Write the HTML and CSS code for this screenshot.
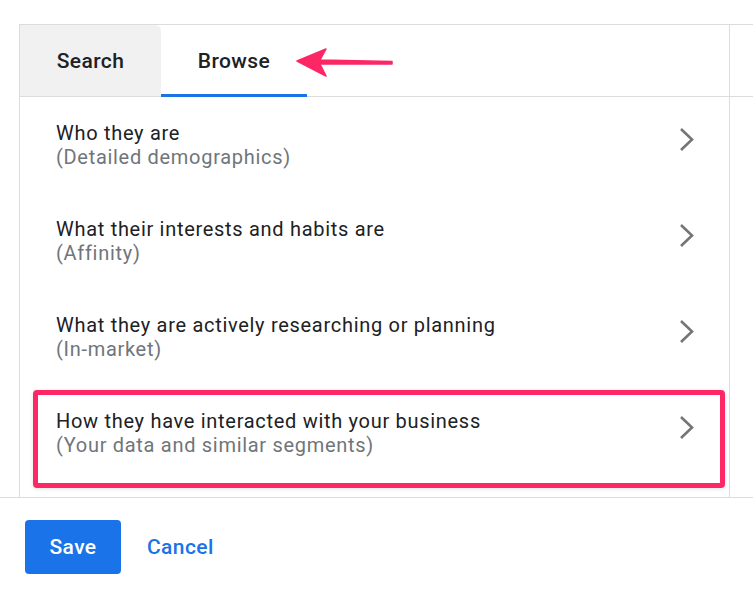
FILE: index.html
```html
<!DOCTYPE html>
<html lang="en">
<head>
    <meta charset="UTF-8">
    <title>Audience segments</title>
    <link rel="stylesheet" href="styles.css">
</head>
<body>
    <div class="dialog">
        <div class="tabs">
            <div class="tabs-inner">
                <div class="tab">Search</div>
                <div class="tab tab-active">Browse</div>
                <svg class="tab-arrow" width="100" height="32" viewBox="0 0 100 32">
                    <path d="M1 14 L30 2 L24 13 L96 14.5 L96 17 L24 17 L30 29 Z" fill="#fd2765" stroke="#fd2765" stroke-width="1.5" stroke-linejoin="round"/>
                </svg>
            </div>
        </div>

        <div class="list">
            <div class="row">
                <div class="row-text">
                    <div class="row-title">Who they are</div>
                    <div class="row-sub">(Detailed demographics)</div>
                </div>
                <svg class="chevron" width="16" height="26" viewBox="0 0 16 26"><polyline points="2,2 13,12.5 2,23" /></svg>
            </div>
            <div class="row">
                <div class="row-text">
                    <div class="row-title">What their interests and habits are</div>
                    <div class="row-sub">(Affinity)</div>
                </div>
                <svg class="chevron" width="16" height="26" viewBox="0 0 16 26"><polyline points="2,2 13,12.5 2,23" /></svg>
            </div>
            <div class="row">
                <div class="row-text">
                    <div class="row-title">What they are actively researching or planning</div>
                    <div class="row-sub">(In-market)</div>
                </div>
                <svg class="chevron" width="16" height="26" viewBox="0 0 16 26"><polyline points="2,2 13,12.5 2,23" /></svg>
            </div>
            <div class="row row-highlight">
                <div class="row-text">
                    <div class="row-title">How they have interacted with your business</div>
                    <div class="row-sub">(Your data and similar segments)</div>
                </div>
                <svg class="chevron" width="16" height="26" viewBox="0 0 16 26"><polyline points="2,2 13,12.5 2,23" /></svg>
                <div class="highlight-box"></div>
            </div>
        </div>
    </div>

    <div class="footer">
        <button class="btn-save">Save</button>
        <button class="btn-cancel">Cancel</button>
    </div>
</body>
</html>
```

FILE: styles.css
```css
body {
    margin: 0;
    background: #fff;
    font-family: Roboto, "Liberation Sans", sans-serif;
    color: #202124;
}

/* Panel */
.dialog {
    margin: 24px 0 0 19px;
    border-top: 1px solid #dadce0;
    border-left: 1px solid #dadce0;
}

/* Tabs */
.tabs {
    border-bottom: 1px solid #dadce0;
}

.tabs-inner {
    width: 710px;
    box-sizing: border-box;
    height: 71px;
    border-right: 1px solid #dadce0;
    display: flex;
    position: relative;
}

.tab {
    display: flex;
    align-items: center;
    justify-content: center;
    font-size: 21px;
    font-weight: 500;
    letter-spacing: 0.4px;
    color: #202124;
    box-sizing: border-box;
}

.tab:first-child {
    width: 141px;
    background: #f1f1f1;
    border-top-right-radius: 6px;
}

.tab-active {
    width: 146px;
    border-bottom: 3px solid #1a73e8;
    margin-bottom: -1px;
    padding-top: 2px;
}

.tab-arrow {
    position: absolute;
    left: 276px;
    top: 22px;
}

/* List */
.list {
    width: 710px;
    box-sizing: border-box;
    border-right: 1px solid #dadce0;
    padding-bottom: 16px;
}

.row {
    display: flex;
    align-items: flex-start;
    justify-content: space-between;
    height: 96px;
    box-sizing: border-box;
    padding: 24px 34px 24px 36px;
    position: relative;
}

.row-title,
.row-sub {
    font-size: 20px;
    line-height: 24px;
    letter-spacing: 0.7px;
}

.row-title {
    color: #202124;
}

.row-sub {
    color: #70757a;
}

.chevron {
    margin-top: 6px;
    fill: none;
    stroke: #757575;
    stroke-width: 2.6;
}

.highlight-box {
    position: absolute;
    top: 5px;
    left: 13px;
    right: 4px;
    bottom: -7px;
    border: 5px solid #fd2765;
    border-radius: 4px;
    box-shadow: 0 1px 4px rgba(0, 0, 0, 0.12);
}

/* Footer */
.footer {
    border-top: 1px solid #dadce0;
    padding: 22px 0 0 25px;
    display: flex;
    align-items: center;
    gap: 26px;
}

.btn-save,
.btn-cancel {
    font-family: Roboto, "Liberation Sans", sans-serif;
    font-size: 21px;
    font-weight: 500;
    letter-spacing: 0.4px;
}

.btn-save {
    width: 96px;
    height: 54px;
    background: #1a73e8;
    color: #fff;
    border: none;
    border-radius: 4px;
}

.btn-cancel {
    background: none;
    border: none;
    padding: 0;
    color: #1a73e8;
}
```
